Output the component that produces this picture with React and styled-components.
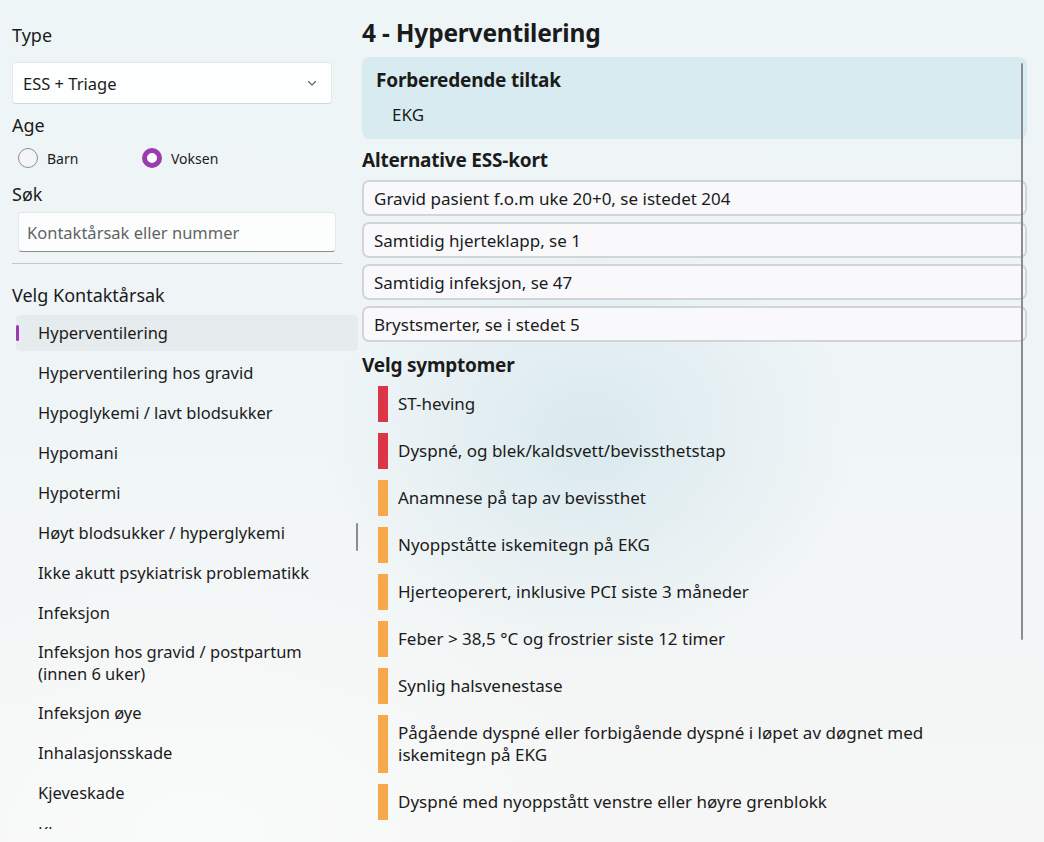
import React from 'react';
import styled, { createGlobalStyle } from 'styled-components';

const GlobalStyle = createGlobalStyle`
  html, body {
    margin: 0;
    padding: 0;
    height: 100%;
    overflow: hidden;
  }
  body {
    font-family: "Noto Sans", "Open Sans", sans-serif;
    color: #1b1b1b;
  }
`;

const Window = styled.div`
  width: 1044px;
  height: 842px;
  display: flex;
  overflow: hidden;
  background:
    radial-gradient(ellipse 260px 230px at 590px 440px, rgba(208, 228, 235, 0.7), rgba(208, 228, 235, 0) 100%),
    radial-gradient(ellipse 420px 300px at 200px 840px, rgba(250, 251, 251, 0.9), rgba(250, 251, 251, 0) 100%),
    linear-gradient(180deg, #eef5f7 0%, #eff5f7 45%, #f3f6f6 75%, #f6f6f6 100%);
`;

const Sidebar = styled.aside`
  width: 346px;
  padding: 24px 0 13px 12px;
  display: flex;
  flex-direction: column;
  flex-shrink: 0;
`;

const FieldLabel = styled.div`
  font-size: 18px;
  line-height: 22px;
  margin-top: ${p => p.$gap || 0}px;
`;

const ComboBox = styled.div`
  margin-top: 16px;
  width: 320px;
  height: 42px;
  box-sizing: border-box;
  background: #fdfefe;
  border: 1px solid #e4e8ea;
  border-bottom-color: #d2d6d8;
  border-radius: 4px;
  display: flex;
  align-items: center;
  justify-content: space-between;
  padding: 0 14px 0 10px;
  font-size: 16.5px;
`;

const Chevron = styled.svg`
  width: 10px;
  height: 10px;
`;

const RadioRow = styled.div`
  display: flex;
  margin-top: 12px;
  padding-left: 6px;
  height: 20px;
  align-items: center;
`;

const RadioOption = styled.label`
  display: flex;
  align-items: center;
  gap: 9px;
  width: 124px;
  font-size: 14px;
`;

const RadioCircle = styled.span`
  width: 20px;
  height: 20px;
  box-sizing: border-box;
  border-radius: 50%;
  background: ${p => (p.$checked ? '#fff' : '#f3f5f6')};
  border: ${p => (p.$checked ? '5px solid #9a3cb0' : '1px solid #8d8f90')};
`;

const SearchBox = styled.div`
  margin: 7px 0 0 6px;
  width: 318px;
  height: 40px;
  box-sizing: border-box;
  background: #fcfdfd;
  border: 1px solid #e4e8ea;
  border-bottom: 1px solid #8c8f91;
  border-radius: 4px;
  display: flex;
  align-items: center;
  padding-left: 8px;
  font-size: 16.5px;
  color: #626466;
`;

const Divider = styled.div`
  margin-top: 11px;
  width: 330px;
  height: 1px;
  background: #c4c8ca;
`;

const ListArea = styled.div`
  position: relative;
  margin-top: 9px;
  flex: 1;
  overflow: hidden;
`;

const List = styled.ul`
  list-style: none;
  margin: 0;
  padding: 0 0 0 4px;
  display: flex;
  flex-direction: column;
  gap: 4px;
`;

const ListItem = styled.li`
  position: relative;
  min-height: 36px;
  box-sizing: border-box;
  padding: 6px 40px 6px 22px;
  display: flex;
  align-items: center;
  font-size: 16.5px;
  line-height: 22px;
  border-radius: 4px;
  width: 342px;
  background: ${p => (p.$selected ? 'rgba(0, 0, 0, 0.035)' : 'transparent')};
`;

const SelectedMark = styled.span`
  position: absolute;
  left: 0;
  top: 10px;
  width: 3px;
  height: 16px;
  border-radius: 2px;
  background: #9a3cb0;
`;

const ScrollThumb = styled.div`
  position: absolute;
  width: 2px;
  border-radius: 1px;
  background: #8a8d8f;
  right: ${p => p.$right}px;
  top: ${p => p.$top}px;
  height: ${p => p.$height}px;
`;

const Main = styled.main`
  position: relative;
  width: 665px;
  margin-left: 4px;
  padding-top: 18px;
  display: flex;
  flex-direction: column;
`;

const Title = styled.h1`
  margin: 0;
  font-size: 24.5px;
  line-height: 30px;
  font-weight: 700;
  letter-spacing: -0.2px;
`;

const PrepCard = styled.section`
  margin-top: 9px;
  height: 82px;
  box-sizing: border-box;
  background: #d7ebf0;
  border-radius: 8px;
  padding: 11px 14px;
`;

const SectionTitle = styled.h2`
  margin: ${p => p.$gap || 0}px 0 0;
  font-size: 19px;
  line-height: 24px;
  font-weight: 700;
  letter-spacing: -0.2px;
`;

const PrepItem = styled.div`
  margin: 12px 0 0 16px;
  font-size: 17px;
  line-height: 22px;
`;

const AltList = styled.div`
  margin-top: 8px;
  display: flex;
  flex-direction: column;
  gap: 6px;
`;

const AltCard = styled.div`
  height: 36px;
  box-sizing: border-box;
  border: 2px solid #d3d4d7;
  border-radius: 7px;
  background: #f9f9fc;
  display: flex;
  align-items: center;
  padding-left: 10px;
  font-size: 17px;
`;

const SymptomList = styled.div`
  margin: 9px 0 0 16px;
  display: flex;
  flex-direction: column;
  gap: 11px;
`;

const Symptom = styled.div`
  display: flex;
  gap: 10px;
  align-items: stretch;
  min-height: 36px;
`;

const Severity = styled.span`
  width: 10px;
  flex-shrink: 0;
  background: ${p => (p.$level === 'red' ? '#dc3548' : '#f6a84b')};
`;

const SymptomText = styled.div`
  padding: 7px 0;
  font-size: 17px;
  line-height: 22px;
  max-width: 560px;
`;

const causes = [
  'Hyperventilering',
  'Hyperventilering hos gravid',
  'Hypoglykemi / lavt blodsukker',
  'Hypomani',
  'Hypotermi',
  'Høyt blodsukker / hyperglykemi',
  'Ikke akutt psykiatrisk problematikk',
  'Infeksjon',
  'Infeksjon hos gravid / postpartum (innen 6 uker)',
  'Infeksjon øye',
  'Inhalasjonsskade',
  'Kjeveskade',
  'Klage',
];

const alternatives = [
  'Gravid pasient f.o.m uke 20+0, se istedet 204',
  'Samtidig hjerteklapp, se 1',
  'Samtidig infeksjon, se 47',
  'Brystsmerter, se i stedet 5',
];

const symptoms = [
  { text: 'ST-heving', level: 'red' },
  { text: 'Dyspné, og blek/kaldsvett/bevissthetstap', level: 'red' },
  { text: 'Anamnese på tap av bevissthet', level: 'orange' },
  { text: 'Nyoppståtte iskemitegn på EKG', level: 'orange' },
  { text: 'Hjerteoperert, inklusive PCI siste 3 måneder', level: 'orange' },
  { text: 'Feber > 38,5 °C og frostrier siste 12 timer', level: 'orange' },
  { text: 'Synlig halsvenestase', level: 'orange' },
  { text: 'Pågående dyspné eller forbigående dyspné i løpet av døgnet med iskemitegn på EKG', level: 'orange' },
  { text: 'Dyspné med nyoppstått venstre eller høyre grenblokk', level: 'orange' },
];

export default function App() {
  return (
    <>
      <GlobalStyle />
      <Window>
        <Sidebar>
          <FieldLabel>Type</FieldLabel>
          <ComboBox>
            <span>ESS + Triage</span>
            <Chevron viewBox="0 0 10 10">
              <path d="M1.5 3.5 L5 7 L8.5 3.5" fill="none" stroke="#5f6163" strokeWidth="1.1" strokeLinecap="round" strokeLinejoin="round" />
            </Chevron>
          </ComboBox>
          <FieldLabel $gap={10}>Age</FieldLabel>
          <RadioRow>
            <RadioOption>
              <RadioCircle />
              Barn
            </RadioOption>
            <RadioOption>
              <RadioCircle $checked />
              Voksen
            </RadioOption>
          </RadioRow>
          <FieldLabel $gap={15}>Søk</FieldLabel>
          <SearchBox>Kontaktårsak eller nummer</SearchBox>
          <Divider />
          <FieldLabel $gap={20}>Velg Kontaktårsak</FieldLabel>
          <ListArea>
            <List>
              {causes.map((c, i) => (
                <ListItem key={c} $selected={i === 0}>
                  {i === 0 && <SelectedMark />}
                  {c}
                </ListItem>
              ))}
            </List>
            <ScrollThumb $right={0} $top={208} $height={28} />
          </ListArea>
        </Sidebar>

        <Main>
          <Title>4 - Hyperventilering</Title>
          <PrepCard>
            <SectionTitle>Forberedende tiltak</SectionTitle>
            <PrepItem>EKG</PrepItem>
          </PrepCard>
          <SectionTitle $gap={9}>Alternative ESS-kort</SectionTitle>
          <AltList>
            {alternatives.map(a => (
              <AltCard key={a}>{a}</AltCard>
            ))}
          </AltList>
          <SectionTitle $gap={11}>Velg symptomer</SectionTitle>
          <SymptomList>
            {symptoms.map(s => (
              <Symptom key={s.text}>
                <Severity $level={s.level} />
                <SymptomText>{s.text}</SymptomText>
              </Symptom>
            ))}
          </SymptomList>
          <ScrollThumb $right={4} $top={63} $height={577} />
        </Main>
      </Window>
    </>
  );
}
